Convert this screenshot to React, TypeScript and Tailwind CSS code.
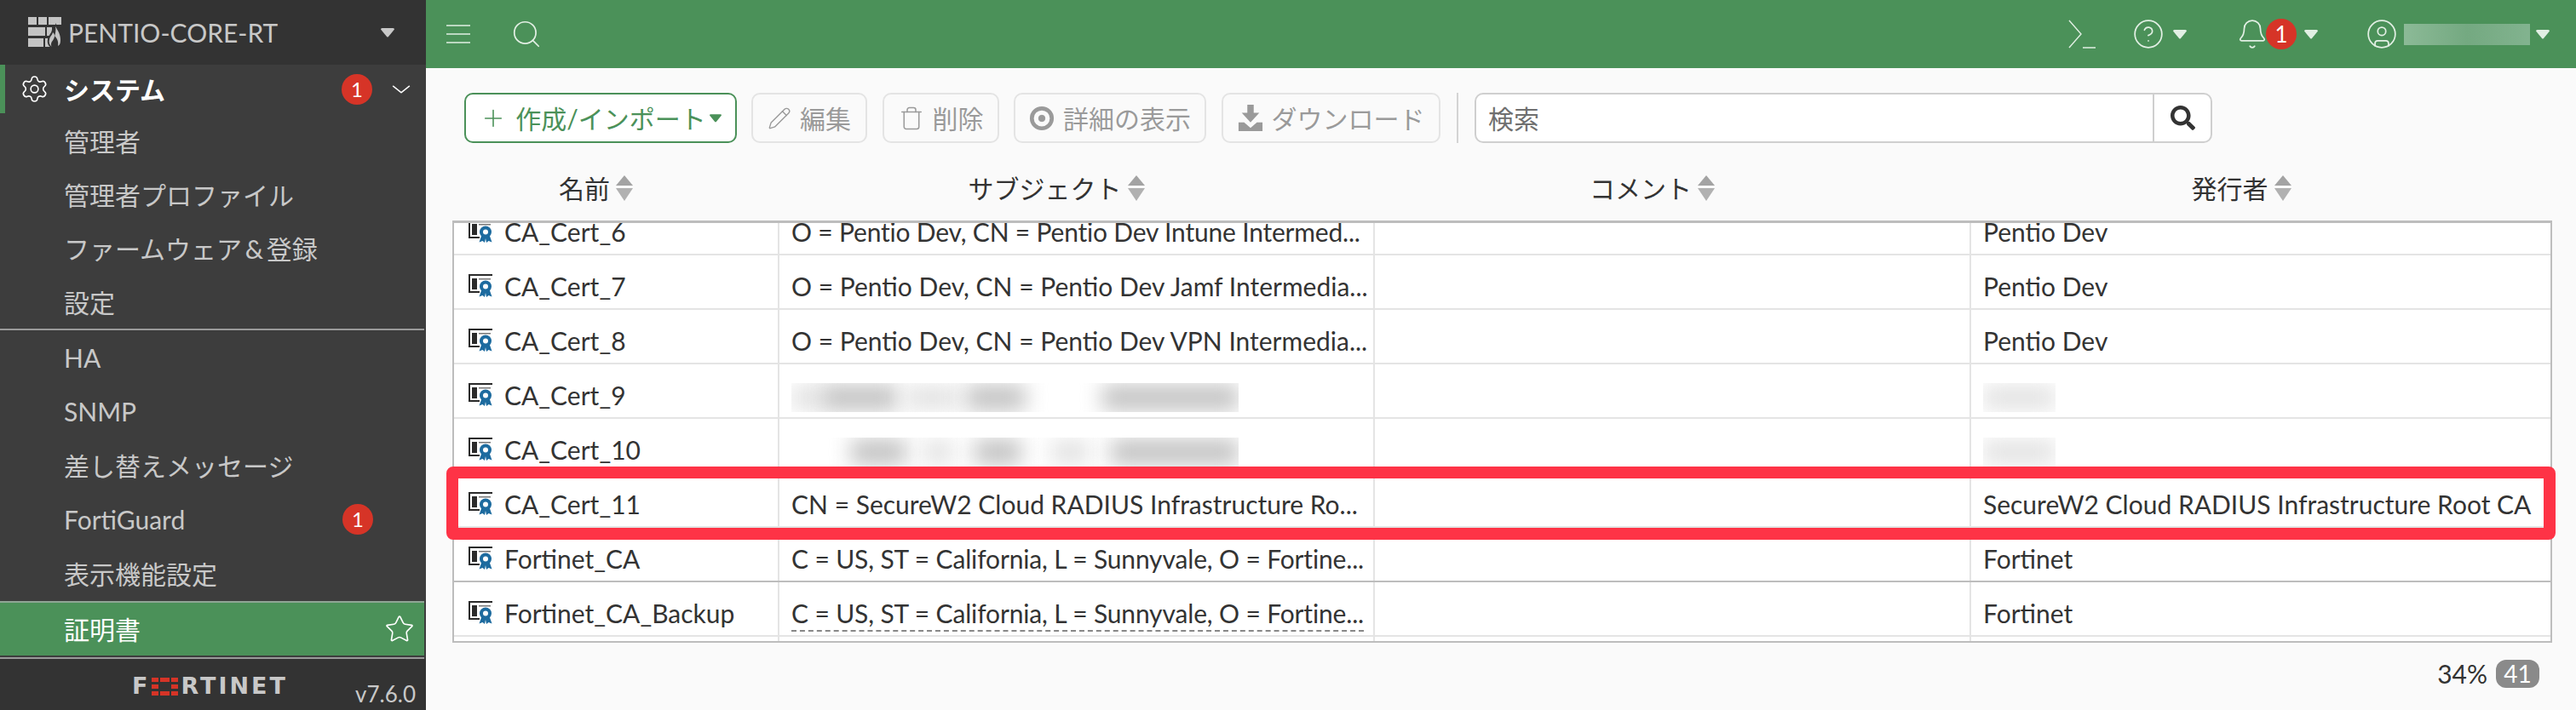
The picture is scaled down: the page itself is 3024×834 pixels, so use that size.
import { Settings, ChevronDown, Star, Search, CircleHelp, Bell, CircleUser, Plus, Pencil, Trash } from 'lucide-react';
import { FaSearch } from 'react-icons/fa';

const GRID = 'grid grid-cols-[382px_699px_700px_1fr]';

function Caret({ className }: { className: string }) {
  return (
    <svg viewBox="0 0 16 11" className={className} fill="currentColor">
      <path d="M0 1.5 Q0 0 1.5 0 H14.5 Q16 0 16 1.5 L9 10 Q8 11 7 10 Z" />
    </svg>
  );
}

function Badge() {
  return (
    <span className="flex items-center justify-center w-9 h-9 rounded-full bg-[#d63427] text-white text-[24px] leading-none">1</span>
  );
}

function SortIcon() {
  return (
    <svg viewBox="0 0 22 30" className="w-[22px] h-[30px] text-[#a3a3a3]" fill="currentColor">
      <path d="M11 0 L21 12 H1 Z" />
      <path d="M1 15 H21 L11 30 Z" opacity="0.85" />
    </svg>
  );
}

function CertIcon() {
  return (
    <svg viewBox="0 0 28 27" className="w-7 h-[27px] shrink-0">
      <path d="M0 0 H28 V2 H2 V20 H13 V22 H0 Z" fill="#2b2b2b" />
      <rect x="4" y="5" width="6" height="13" fill="#2b2b2b" />
      <rect x="12" y="5" width="14" height="1.5" fill="#777" />
      <path d="M15.5 18 L12.5 26.5 L16.5 25 L19 27 L20 22 L21 27 L23.5 25 L27.5 26.5 L24.5 18 Z" fill="#1d6b9f" />
      <circle cx="20" cy="14.5" r="7" fill="#1d6b9f" />
      <circle cx="20" cy="14.5" r="3" fill="#fff" />
    </svg>
  );
}

function FirewallIcon() {
  return (
    <svg viewBox="0 0 40 36" className="w-10 h-9 shrink-0" fill="#c4c4c4">
      <rect x="0" y="0" width="10" height="9" />
      <rect x="12" y="0" width="10" height="9" />
      <rect x="24" y="0" width="15" height="9" />
      <rect x="0" y="12" width="20" height="10" />
      <rect x="22" y="12" width="6" height="10" />
      <rect x="0" y="25" width="18" height="10" />
      <rect x="20" y="25" width="6" height="10" />
      <path d="M32 7 C36 13 40 17 40 27 C40 33 36 36 30 36 C24 36 22 31 23 26 C24 21 27 20 28 15 C30 17 30 19 30 20 C32 17 33 12 32 7 Z" fill="#333" />
      <path d="M32 11 C35 16 38 20 38 27 C38 31 37 33 35 34 C36 29 34 25 31 22 C31 27 27 28 27 32 C27 33 27 34 28 35 C25 33 24 30 25 26 C26 22 28 22 29 18 C31 20 31 21 31 23 C32 19 33 15 32 11 Z" fill="#c4c4c4" />
    </svg>
  );
}

function FortinetO() {
  return (
    <svg viewBox="0 0 31 21" className="w-[31px] h-[21px] ml-[2px] mr-[3px]" fill="#d63427">
      <rect x="0" y="0" width="8" height="5" />
      <rect x="10" y="0" width="11" height="5" />
      <rect x="23" y="0" width="8" height="5" />
      <rect x="0" y="8" width="8" height="5" />
      <rect x="23" y="8" width="8" height="5" />
      <rect x="0" y="16" width="8" height="5" />
      <rect x="10" y="16" width="11" height="5" />
      <rect x="23" y="16" width="8" height="5" />
    </svg>
  );
}

function ToolButton({ icon, label, className }: { icon: React.ReactNode; label: string; className: string }) {
  return (
    <div className={`flex items-center justify-center gap-[10px] h-[59px] rounded-[10px] border-2 border-[#e4e4e4] text-[#9a9a9a] ${className}`}>
      {icon}
      <span>{label}</span>
    </div>
  );
}

function HeaderCell({ label, className = 'pr-12' }: { label: string; className?: string }) {
  return (
    <div className={`flex items-center justify-center gap-[6px] text-[#333] ${className}`}>
      <span>{label}</span>
      <SortIcon />
    </div>
  );
}

function BlurBlobs({ blobs }: { blobs: string[] }) {
  return (
    <div className="flex items-center h-[34px] overflow-hidden">
      {blobs.map((b, i) => (
        <div key={i} className={b} />
      ))}
    </div>
  );
}

const blob = 'h-[30px] bg-[#c2c2c2] blur-[12px]';
const faint = 'h-[28px] bg-[#e2e2e2] blur-[12px]';

const rows: { name: string; subject: React.ReactNode; issuer: React.ReactNode; dark?: boolean }[] = [
  {
    name: 'CA_Cert_6',
    subject: <span className="tracking-[-0.2px]">O = Pentio Dev, CN = Pentio Dev Intune Intermed...</span>,
    issuer: 'Pentio Dev',
  },
  { name: 'CA_Cert_7', subject: 'O = Pentio Dev, CN = Pentio Dev Jamf Intermedia...', issuer: 'Pentio Dev' },
  { name: 'CA_Cert_8', subject: 'O = Pentio Dev, CN = Pentio Dev VPN Intermedia...', issuer: 'Pentio Dev' },
  {
    name: 'CA_Cert_9',
    subject: (
      <BlurBlobs blobs={[`${faint} w-[35px]`, `${blob} w-[90px]`, `${faint} w-[60px] ml-[10px]`, `${blob} w-[70px] ml-[10px]`, 'w-[90px]', `${blob} w-[160px]`]} />
    ),
    issuer: <BlurBlobs blobs={[`${faint} w-[85px]`]} />,
  },
  {
    name: 'CA_Cert_10',
    subject: (
      <BlurBlobs blobs={['w-[70px]', `${blob} w-[65px]`, `${faint} w-[35px] ml-[20px]`, `${blob} w-[55px] ml-[25px]`, `${faint} w-[45px] ml-[35px]`, `${blob} w-[150px] ml-[25px]`]} />
    ),
    issuer: <BlurBlobs blobs={[`${faint} w-[85px]`]} />,
  },
  {
    name: 'CA_Cert_11',
    subject: 'CN = SecureW2 Cloud RADIUS Infrastructure Ro...',
    issuer: 'SecureW2 Cloud RADIUS Infrastructure Root CA',
  },
  {
    name: 'Fortinet_CA',
    subject: <span className="tracking-[-0.15px]">C = US, ST = California, L = Sunnyvale, O = Fortine...</span>,
    issuer: 'Fortinet',
    dark: true,
  },
  {
    name: 'Fortinet_CA_Backup',
    subject: (
      <span className="relative tracking-[-0.15px]">
        C = US, ST = California, L = Sunnyvale, O = Fortine...
        <span className="absolute left-0 right-0 bottom-[-2px] border-b-2 border-dashed border-[#888]" />
      </span>
    ),
    issuer: 'Fortinet',
  },
];

function Row({ name, subject, issuer, dark }: { name: string; subject: React.ReactNode; issuer: React.ReactNode; dark?: boolean }) {
  return (
    <div className={`${GRID} h-[64px] first:-mt-[26px] border-b-2 ${dark ? 'border-[#bdbdbd]' : 'border-[#e4e4e4]'}`}>
      <div className="flex items-end pb-[6px] pl-[17px] gap-[14px] border-r-2 border-[#e4e4e4]">
        <div className="mb-[7px]">
          <CertIcon />
        </div>
        <span>{name}</span>
      </div>
      <div className="flex items-end pb-[6px] pl-[14px] border-r-2 border-[#e4e4e4] whitespace-nowrap overflow-hidden">{subject}</div>
      <div className="border-r-2 border-[#e4e4e4]" />
      <div className="flex items-end pb-[6px] pl-[14px] whitespace-nowrap overflow-hidden">{issuer}</div>
    </div>
  );
}

const menuTop = ['管理者', '管理者プロファイル', 'ファームウェア & 登録', '設定'];
const menuBottom = ['HA', 'SNMP', '差し替えメッセージ', 'FortiGuard', '表示機能設定'];

export default function App() {
  return (
    <div className="flex w-[3024px] h-[834px] overflow-hidden bg-[#fafafa] text-[30px] leading-[40px] text-[#333] font-['Lato','Noto_Sans_CJK_JP',sans-serif]">
      {/* Sidebar */}
      <aside className="flex flex-col w-[500px] shrink-0 bg-[#3d3d3d] text-[#c8c8c8]">
        <div className="flex items-center h-[78px] pl-[33px] pr-[37px] bg-[#333]">
          <FirewallIcon />
          <span className="ml-[7px]">PENTIO-CORE-RT</span>
          <Caret className="w-[16px] h-[11px] ml-auto" />
        </div>
        <div className="flex items-center h-[58px] border-l-[6px] border-[#4b9159] pl-[17px] text-white">
          <Settings size={35} strokeWidth={1.1} />
          <span className="ml-[17px] font-bold">システム</span>
          <div className="ml-auto flex items-center mr-[14px] gap-[19px]">
            <Badge />
            <ChevronDown size={30} strokeWidth={1.1} className="scale-x-125" />
          </div>
        </div>
        <div className="flex flex-col pt-[2px]">
          {menuTop.map((m) => (
            <div key={m} className="flex items-center h-[62.75px] pl-[75px] [word-spacing:-4px]">{m}</div>
          ))}
        </div>
        <div className="h-[2px] bg-[#9a9a9a] mr-[2px]" />
        <div className="flex flex-col flex-1">
          {menuBottom.map((m) => (
            <div key={m} className="flex items-center h-[63.6px] pl-[75px] pr-[62px]">
              <span>{m}</span>
              {m === 'FortiGuard' && <div className="ml-auto"><Badge /></div>}
            </div>
          ))}
        </div>
        <div className="flex items-center h-[66px] pl-[75px] pr-[11px] mr-[2px] bg-[#4b9159] border-t-2 border-[#8fa595] text-white">
          <span>証明書</span>
          <Star size={36} strokeWidth={1.1} className="ml-auto" />
        </div>
        <div className="h-[2px] mt-[2px] bg-[#9a9a9a] mr-[2px]" />
        <div className="relative flex items-center h-[61px] bg-[#333] pt-[4px]">
          <div className="flex items-center ml-[155px] text-[27px] font-bold tracking-[3px] font-['DejaVu_Sans',sans-serif] text-[#c8c8c8]">
            <span>F</span>
            <FortinetO />
            <span>RTINET</span>
          </div>
          <span className="absolute right-[12px] bottom-[2px] text-[26px] leading-[34px]">v7.6.0</span>
        </div>
      </aside>

      {/* Main */}
      <main className="relative flex flex-col flex-1 min-w-0">
        <header className="flex items-center h-20 shrink-0 bg-[#4b9159] text-[#e2efe4] pl-6 pr-[31px]">
          <svg viewBox="0 0 31 22" className="w-[31px] h-[22px]" stroke="currentColor" strokeWidth="1.6">
            <path d="M0 1 H28 M0 11 H28 M0 21 H28" />
          </svg>
          <Search size={38} strokeWidth={1.1} className="ml-[44px]" />
          <div className="ml-auto flex items-center">
            <svg viewBox="0 0 32 34" className="w-8 h-[34px]" fill="none" stroke="currentColor" strokeWidth="1.4">
              <path d="M1 1 L15 17 L1 33 M17 33 H32" />
            </svg>
            <CircleHelp size={38} strokeWidth={1.1} className="ml-[43px]" />
            <Caret className="w-[16px] h-[11px] ml-[10px]" />
            <Bell size={38} strokeWidth={1.1} className="ml-[58px]" />
            <div className="-ml-[3px]">
              <span className="flex items-center justify-center w-9 h-9 rounded-full bg-[#d63427] text-white text-[26px] leading-none">1</span>
            </div>
            <Caret className="w-[16px] h-[11px] ml-[9px]" />
            <CircleUser size={38} strokeWidth={1.1} className="ml-[56px]" />
            <div className="w-[148px] h-[25px] ml-[7px] bg-linear-to-r from-[#8cba97] via-[#74a981] to-[#82b38f]" />
            <Caret className="w-[16px] h-[11px] ml-[7px]" />
          </div>
        </header>

        <div className="flex items-center h-[59px] mt-[29px] ml-[45px] shrink-0">
          <div className="flex items-center justify-center gap-[10px] w-[320px] h-[59px] rounded-[10px] border-2 border-[#4b9159] bg-white text-[#4b9159]">
            <Plus size={32} strokeWidth={1.2} />
            <span>作成/インポート</span>
            <Caret className="w-[14px] h-[10px] -ml-[6px]" />
          </div>
          <ToolButton className="w-[136px] ml-[17px]" icon={<Pencil size={28} strokeWidth={1.2} />} label="編集" />
          <ToolButton className="w-[137px] ml-[18px]" icon={<Trash size={30} strokeWidth={1.2} />} label="削除" />
          <ToolButton
            className="w-[226px] ml-[17px]"
            icon={
              <svg viewBox="0 0 32 32" className="w-[30px] h-[30px]" fill="none" stroke="currentColor">
                <circle cx="16" cy="16" r="12.5" strokeWidth="5" />
                <circle cx="16" cy="16" r="4" fill="currentColor" />
              </svg>
            }
            label="詳細の表示"
          />
          <ToolButton
            className="w-[257px] ml-[18px]"
            icon={
              <svg viewBox="0 0 32 34" className="w-[30px] h-8" fill="currentColor">
                <path d="M12 0 H20 V10 H27 L16 22 L5 10 H12 Z" />
                <path d="M1 22 H8 L16 29 L24 22 H31 V33 H1 Z" />
              </svg>
            }
            label="ダウンロード"
          />
          <div className="w-[2px] h-[59px] ml-[19px] bg-[#d4d4d4]" />
          <div className="flex items-center w-[866px] h-[59px] ml-[19px] rounded-[10px] border-2 border-[#cfcfcf] bg-white">
            <span className="flex-1 pl-[14px] text-[#6f6f6f]">検索</span>
            <div className="flex items-center justify-center w-[68px] h-full border-l-2 border-[#cfcfcf] text-[#333]">
              <FaSearch size={29} />
            </div>
          </div>
        </div>

        <div className="mx-[31px] mt-[33px] h-[58px] shrink-0 pr-[28px]">
          <div className={`${GRID} h-[30px]`}>
            <HeaderCell label="名前" className="pr-[44px]" />
            <HeaderCell label="サブジェクト" className="pr-[44px]" />
            <HeaderCell label="コメント" className="pr-[44px]" />
            <HeaderCell label="発行者" className="pr-[14px]" />
          </div>
        </div>

        <div className="ml-[31px] mr-[28px] h-[496px] shrink-0 overflow-hidden border-2 border-t-[3px] border-[#bdbdbd] bg-white">
          {rows.map((r) => (
            <Row key={r.name} {...r} />
          ))}
          <div className={`${GRID} h-[7px]`}>
            <div className="border-r-2 border-[#e4e4e4]" />
            <div className="border-r-2 border-[#e4e4e4]" />
            <div className="border-r-2 border-[#e4e4e4]" />
            <div />
          </div>
        </div>

        <div className="flex items-center justify-end gap-[10px] mt-[16px] pr-[43px]">
          <span>34%</span>
          <span className="flex items-center justify-center w-[51px] h-[33px] rounded-[12px] bg-[#8a8a8a] text-white text-[28px]">41</span>
        </div>

        {/* annotation drawn over the table */}
        <div className="absolute left-[24px] top-[548px] w-[2476px] h-[86px] rounded-[8px] border-[14px] border-[#fe3346]" />
      </main>
    </div>
  );
}
